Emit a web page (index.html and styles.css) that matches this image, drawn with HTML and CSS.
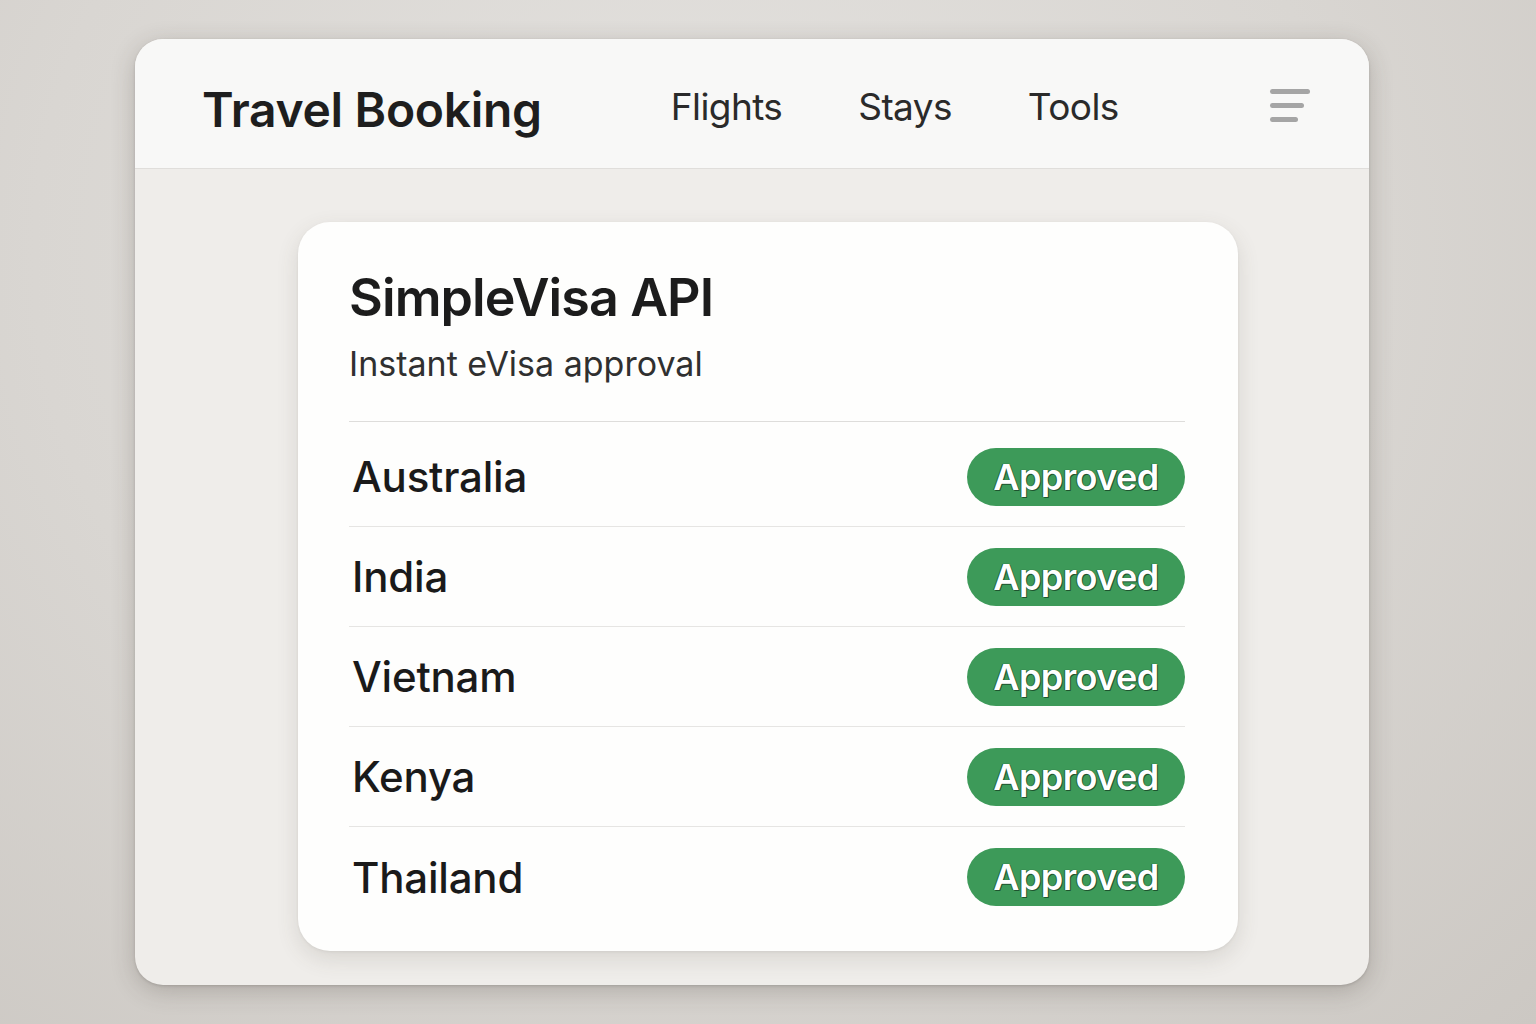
FILE: index.html
```html
<!DOCTYPE html>
<html lang="en">
<head>
<meta charset="utf-8">
<title>Travel Booking</title>
<link rel="stylesheet" href="styles.css">
</head>
<body>
<div class="window">
  <header class="topbar">
    <div class="brand">Travel Booking</div>
    <nav class="nav">
      <a class="nav-link">Flights</a>
      <a class="nav-link">Stays</a>
      <a class="nav-link">Tools</a>
    </nav>
    <div class="menu" aria-label="Menu">
      <span class="bar bar-1"></span>
      <span class="bar bar-2"></span>
      <span class="bar bar-3"></span>
    </div>
  </header>
  <main class="content">
    <section class="card">
      <h1 class="card-title">SimpleVisa API</h1>
      <p class="card-sub">Instant eVisa approval</p>
      <div class="divider"></div>
      <ul class="list">
        <li class="row"><span class="country">Australia</span><span class="badge">Approved</span></li>
        <li class="row"><span class="country">India</span><span class="badge">Approved</span></li>
        <li class="row"><span class="country">Vietnam</span><span class="badge">Approved</span></li>
        <li class="row"><span class="country">Kenya</span><span class="badge">Approved</span></li>
        <li class="row"><span class="country">Thailand</span><span class="badge">Approved</span></li>
      </ul>
    </section>
  </main>
</div>
</body>
</html>
```
FILE: styles.css
```css
* { box-sizing: border-box; }
html, body { margin: 0; padding: 0; }
body {
  width: 1536px;
  height: 1024px;
  overflow: hidden;
  padding: 39px 0 0 135px;
  background: radial-gradient(ellipse at 45% 25%, #e4e2df 0%, #d9d6d2 55%, #ccc8c3 100%);
  font-family: Inter, "Noto Sans", sans-serif;
  color: #1c1c1c;
}
.window {
  width: 1234px;
  height: 946px;
  border-radius: 28px;
  background: #efedea;
  box-shadow: 0 6px 24px rgba(60, 50, 40, 0.24), 0 1px 3px rgba(0,0,0,0.14);
  overflow: hidden;
}
.topbar {
  height: 130px;
  padding: 6px 59px 0 67px;
  display: flex;
  align-items: center;
  background: #f8f8f7;
  border-bottom: 1px solid #e0dedb;
}
.brand {
  font-size: 48px;
  font-weight: 600;
  letter-spacing: -0.3px;
  color: #1e1e1e;
  margin-top: 6px;
}
.nav {
  display: flex;
  gap: 76px;
  margin-left: 129px;
}
.nav-link {
  font-size: 37px;
  font-weight: 400;
  color: #2a2a2a;
  letter-spacing: -0.6px;
}
.menu {
  margin-left: auto;
  width: 40px;
  display: flex;
  flex-direction: column;
  gap: 9px;
  margin-top: -2px;
}
.bar {
  display: block;
  height: 5px;
  border-radius: 3px;
  background: #a5a5a5;
}
.bar-1 { width: 40px; }
.bar-2 { width: 34px; }
.bar-3 { width: 28px; }
.content {
  padding: 53px 0 0 163px;
}
.card {
  width: 940px;
  height: 729px;
  background: #fefefd;
  border-radius: 32px;
  padding: 46px 53px 0 51px;
  box-shadow: 0 8px 22px rgba(80, 70, 60, 0.14), 0 1px 3px rgba(0,0,0,0.06);
}
.card-title {
  margin: 0;
  font-size: 52px;
  line-height: 60px;
  font-weight: 600;
  letter-spacing: -0.9px;
  color: #1c1c1c;
}
.card-sub {
  margin: 16px 0 0;
  font-size: 34px;
  line-height: 40px;
  font-weight: 400;
  color: #303030;
}
.divider {
  margin-top: 37px;
  height: 1px;
  background: #dedddb;
}
.list {
  list-style: none;
  margin: 5px 0 0;
  padding: 0;
}
.row {
  height: 100px;
  display: flex;
  align-items: center;
  justify-content: space-between;
  border-bottom: 1px solid #e6e5e3;
  padding-left: 3px;
}
.row:last-child { border-bottom: none; }
.country {
  font-size: 42px;
  font-weight: 500;
  color: #1a1a1a;
  letter-spacing: -0.2px;
}
.badge {
  width: 218px;
  height: 58px;
  border-radius: 29px;
  background: #3d9a59;
  color: #ffffff;
  font-size: 36px;
  font-weight: 600;
  letter-spacing: -0.6px;
  display: flex;
  align-items: center;
  justify-content: center;
  text-shadow: 0 0 1px #1b4a28, 1px 1px 0 #1f5530, -1px 0 0 #2a6a3c;
}
```
